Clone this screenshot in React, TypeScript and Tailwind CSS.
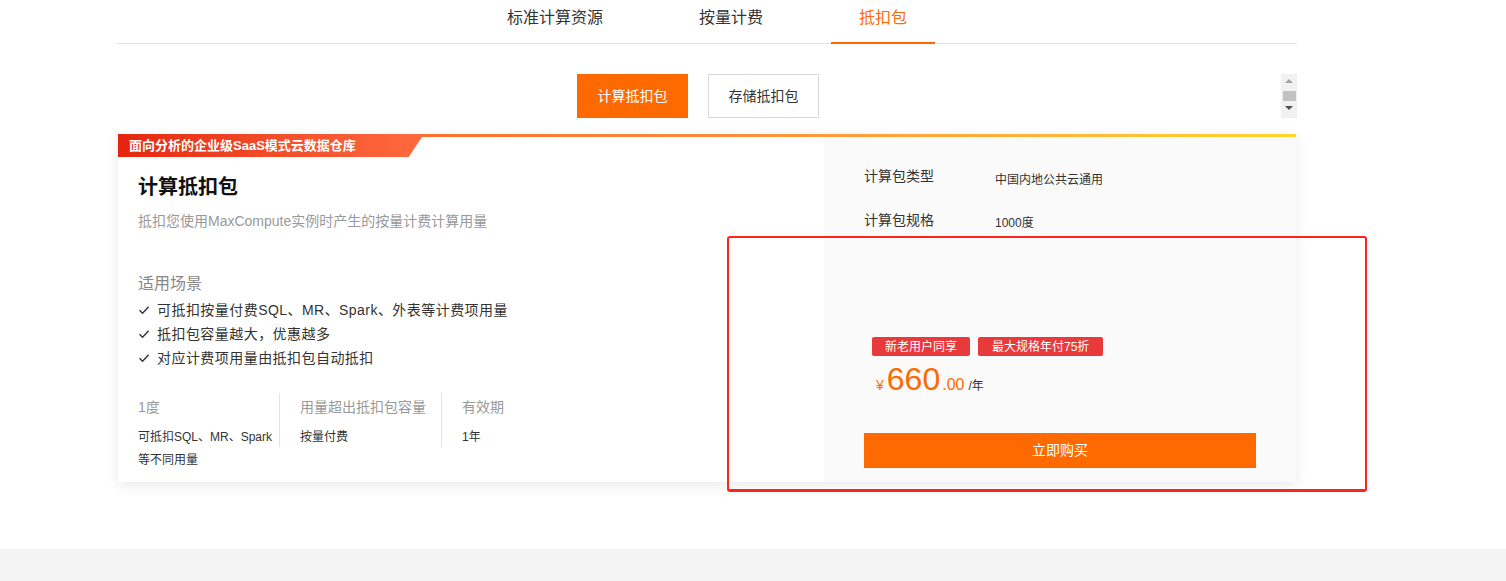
import React from "react";

const font = "font-['Liberation_Sans','Noto_Sans_CJK_SC',sans-serif]";

const tabs = ["标准计算资源", "按量计费", "抵扣包"];

const scenes = [
  "可抵扣按量付费SQL、MR、Spark、外表等计费项用量",
  "抵扣包容量越大，优惠越多",
  "对应计费项用量由抵扣包自动抵扣",
];

function CheckIcon() {
  return (
    <svg width="12" height="12" viewBox="0 0 12 12" fill="none">
      <polyline points="1.5,6.2 4.6,9.2 10.6,2.8" stroke="#333" strokeWidth="1.4" />
    </svg>
  );
}

export default function App() {
  return (
    <div className={`relative min-h-[581px] bg-white text-[#333] ${font}`}>
      <div className="ml-[117px] w-[1180px]">
        {/* top tabs */}
        <div className="flex h-[44px] justify-center gap-[40px] border-b border-[#e3e3e3]">
          {tabs.map((t, i) => (
            <div
              key={t}
              className={
                "-mb-px h-[44px] px-[28px] pt-[7px] text-[16px] leading-[22px] " +
                (i === 2 ? "border-b-2 border-[#ff6a00] text-[#ff6a00]" : "text-[#333]")
              }
            >
              {t}
            </div>
          ))}
        </div>

        {/* sub tabs */}
        <div className="mt-[30px] flex">
          <div className="flex flex-1 justify-center gap-5 pr-[2px]">
            <button className="h-[44px] w-[111px] bg-[#ff6a00] text-[14px] text-white">计算抵扣包</button>
            <button className="h-[44px] w-[111px] border border-[#d9d9d9] bg-white text-[14px] text-[#333]">存储抵扣包</button>
          </div>
          <div className="flex h-[44px] w-[16px] flex-col items-center bg-[#f1f1f1] pt-[5px]">
            <div className="h-0 w-0 border-x-[4px] border-b-[4px] border-x-transparent border-b-[#a3a3a3]" />
            <div className="mt-[8px] h-[10px] w-[13px] bg-[#c1c1c1]" />
            <div className="mt-[5px] h-0 w-0 border-x-[4px] border-t-[4px] border-x-transparent border-t-[#505050]" />
          </div>
        </div>

        {/* card */}
        <div className="relative mx-px mt-[15px] flex h-[349px] bg-white shadow-[0_3px_12px_rgba(0,0,0,0.09)]">
          <div className="absolute left-0 right-0 top-px h-[3px] bg-gradient-to-r from-[#ff4a1e] via-[#ff8a3a] to-[#ffd42e]" />
          <div className="absolute left-0 top-px flex h-[23px] w-[306px] items-center bg-gradient-to-r from-[#e5240f] to-[#ff6a3d] pl-[11px] text-[13px] font-bold text-white [clip-path:polygon(0_0,100%_0,95%_100%,0_100%)]">
            面向分析的企业级SaaS模式云数据仓库
          </div>

          {/* left */}
          <div className="w-[706px] pl-[20px] pt-[40px]">
            <div className="text-[20px] font-bold leading-[28px] text-[#111]">计算抵扣包</div>
            <div className="mt-[10px] text-[14px] leading-[20px] text-[#999]">
              抵扣您使用MaxCompute实例时产生的按量计费计算用量
            </div>
            <div className="mt-[41px] text-[16px] leading-[24px] text-[#888]">适用场景</div>
            <div className="mt-[2px]">
              {scenes.map((s) => (
                <div key={s} className="flex h-[24px] items-center gap-[7px] text-[14px] tracking-[0.45px] text-[#333]">
                  <CheckIcon />
                  <span>{s}</span>
                </div>
              ))}
            </div>
            <div className="mt-[23px] flex items-start">
              <div className="w-[141px] pt-[4px]">
                <div className="text-[14px] leading-[20px] text-[#999]">1度</div>
                <div className="mt-[9px] text-[12px] leading-[23px] text-[#333]">可抵扣SQL、MR、Spark等不同用量</div>
              </div>
              <div className="mr-[20px] h-[54px] w-px bg-[#e3e3e3]" />
              <div className="w-[141px] pt-[4px]">
                <div className="text-[14px] leading-[20px] text-[#999]">用量超出抵扣包容量</div>
                <div className="mt-[9px] text-[12px] leading-[23px] text-[#333]">按量付费</div>
              </div>
              <div className="mr-[20px] h-[54px] w-px bg-[#e3e3e3]" />
              <div className="pt-[4px]">
                <div className="text-[14px] leading-[20px] text-[#999]">有效期</div>
                <div className="mt-[9px] text-[12px] leading-[23px] text-[#333]">1年</div>
              </div>
            </div>
          </div>

          {/* right */}
          <div className="flex flex-1 flex-col bg-[#fafafa] px-[40px] pb-[14px] pt-[33px]">
            <div className="flex">
              <div className="w-[131px] text-[14px] leading-[20px] text-[#333]">计算包类型</div>
              <div className="mt-[4px] text-[12px] leading-[20px] text-[#333]">中国内地公共云通用</div>
            </div>
            <div className="mt-[20px] flex">
              <div className="w-[131px] text-[14px] leading-[20px] text-[#333]">计算包规格</div>
              <div className="mt-[3px] text-[12px] leading-[20px] text-[#333]">1000度</div>
            </div>

            <div className="mt-auto pl-[8px]">
              <div className="flex gap-[8px]">
                <span className="flex h-[19px] items-center rounded-[2px] bg-[#e8393b] px-[13px] text-[12px] text-white">新老用户同享</span>
                <span className="flex h-[19px] items-center rounded-[2px] bg-[#e8393b] px-[14px] text-[12px] text-white">最大规格年付75折</span>
              </div>
              <div className="mt-[7px] flex items-baseline pl-[4px] text-[#ff6a00]">
                <span className="mr-[3px] text-[14px]">¥</span>
                <span className="text-[32px] leading-[33px]">660</span>
                <span className="ml-[2px] text-[16px]">.00</span>
                <span className="ml-[4px] text-[12px] text-[#333]">/年</span>
              </div>
            </div>
            <button className="mt-[36px] h-[35px] w-full bg-[#ff6a00] text-[14px] text-white">立即购买</button>
          </div>
        </div>
      </div>

      {/* footer strip */}
      <div className="mt-[67px] h-[32px] bg-[#f4f4f4]" />

      {/* annotation box */}
      <div className="pointer-events-none absolute left-[727px] top-[236px] h-[256px] w-[640px] rounded-[3px] border-2 border-b-[3px] border-[#ff2419]" />
    </div>
  );
}
